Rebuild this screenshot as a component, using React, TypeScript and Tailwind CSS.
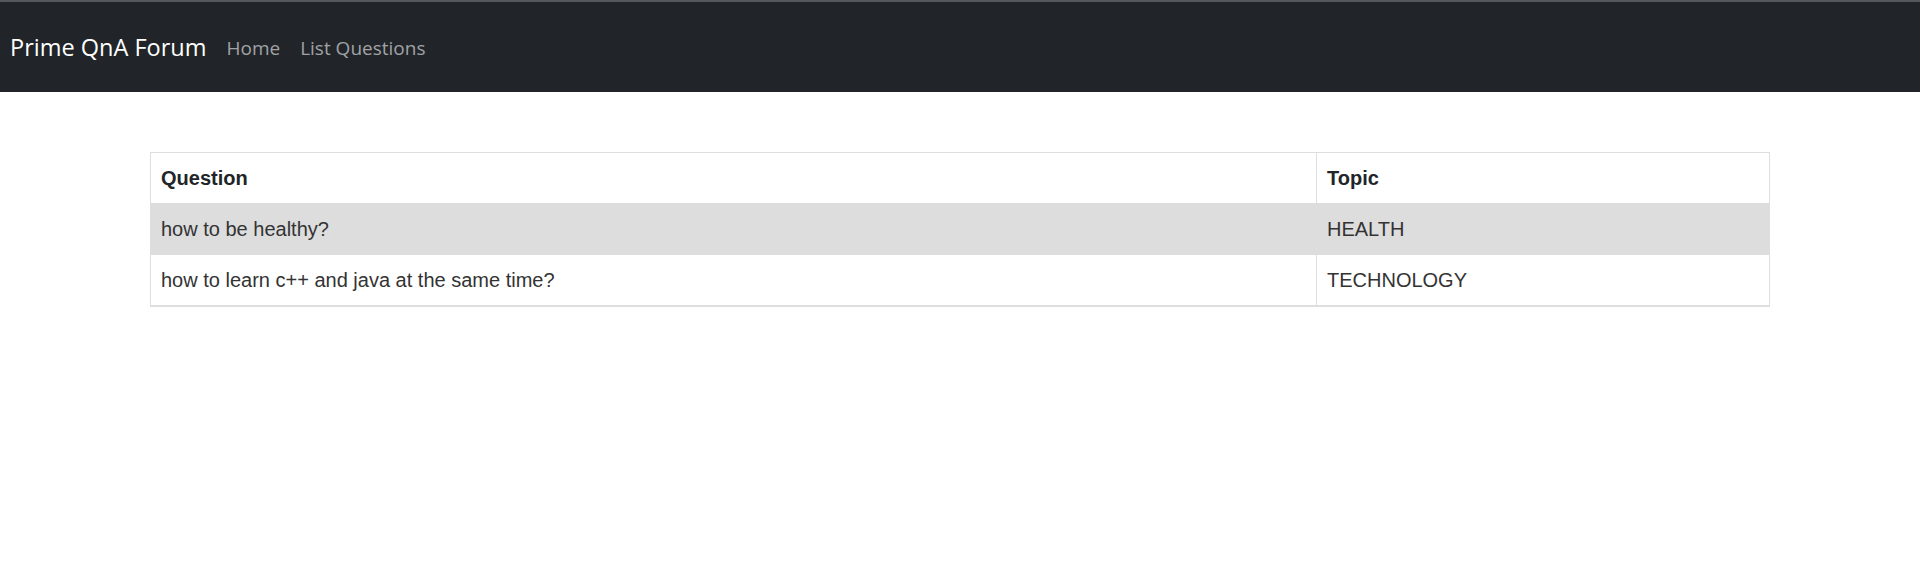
const questions = [
  { question: "how to be healthy?", topic: "HEALTH" },
  { question: "how to learn c++ and java at the same time?", topic: "TECHNOLOGY" },
];

const NavBar = () => {
  return (
    <nav className="flex h-[92px] items-center border-t-2 border-[#54575b] bg-[#212529] px-[10px] pt-[2px] font-['Open_Sans','Noto_Sans',sans-serif]">
      <a href="#" className="mr-[20px] text-[23.5px] text-white">
        Prime QnA Forum
      </a>
      <div className="flex items-center gap-[20px] text-[19px] text-[#a0a2a5]">
        <a href="#">Home</a>
        <a href="#">List Questions</a>
      </div>
    </nav>
  );
};

export default function App() {
  return (
    <div className="min-h-[582px] bg-white">
      <NavBar />
      <main className="mx-auto mt-[60px] w-[1620px] font-['Liberation_Sans',Arial,sans-serif]">
        <table className="w-full border-collapse border border-b-2 border-[#dedede] text-[20px] leading-[30px]">
          <thead>
            <tr className="h-[50px] text-[#212529]">
              <th className="w-[1166px] border-r border-[#dedede] px-[10px] text-left font-bold">
                Question
              </th>
              <th className="px-[10px] text-left font-bold">Topic</th>
            </tr>
          </thead>
          <tbody className="text-[#333333]">
            {questions.map((q, i) => (
              <tr
                key={q.question}
                className={i % 2 === 0 ? "h-[52px] bg-[#dddddd]" : "h-[51px] bg-white"}
              >
                <td className="border-r border-[#dedede] px-[10px]">{q.question}</td>
                <td className="px-[10px]">{q.topic}</td>
              </tr>
            ))}
          </tbody>
        </table>
      </main>
    </div>
  );
}
